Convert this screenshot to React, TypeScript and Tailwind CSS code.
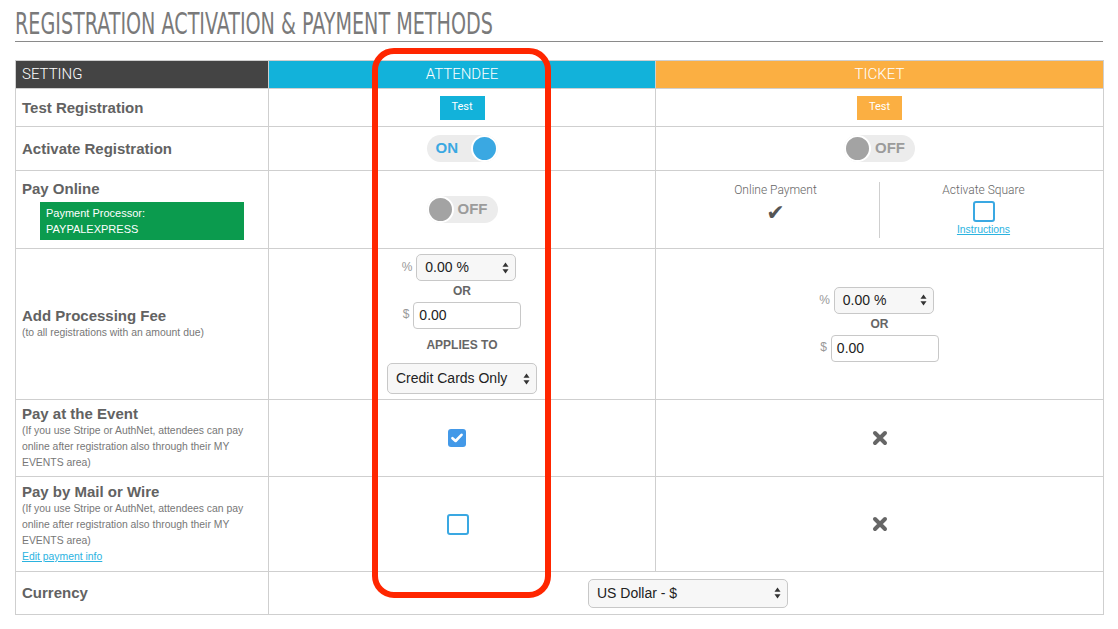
import type { ReactElement, ReactNode } from 'react'

const sans = "font-['Liberation_Sans',Arial,sans-serif]"
const light = "font-['Roboto','Liberation_Sans',sans-serif] font-light"

function Arrows(): ReactElement {
  return (
    <svg width="7" height="12" viewBox="0 0 7 12" className="shrink-0">
      <path d="M3.5 0.5 L6.5 4.8 L0.5 4.8 Z" fill="#333" />
      <path d="M3.5 11.5 L6.5 7.2 L0.5 7.2 Z" fill="#333" />
    </svg>
  )
}

function FakeSelect({ value, className }: { value: string; className: string }): ReactElement {
  return (
    <div
      className={`flex items-center justify-between rounded-[5px] border border-[#c8c8c8] bg-[#f7f7f7] pl-[8px] pr-[6px] text-[14px] text-[#222] ${sans} ${className}`}
    >
      <span>{value}</span>
      <Arrows />
    </div>
  )
}

function FakeInput({ value }: { value: string }): ReactElement {
  return (
    <div
      className={`flex h-[27px] w-[108px] items-center rounded-[4px] border border-[#c8c8c8] bg-white pl-[5px] text-[14px] text-[#222] ${sans}`}
    >
      {value}
    </div>
  )
}

function Toggle({ on }: { on: boolean }): ReactElement {
  return (
    <div className="mx-auto flex h-[27px] w-[71px] items-center rounded-full bg-[#ececec]">
      {on ? (
        <>
          <span className={`flex-1 pl-[9px] text-left text-[15px] font-bold text-[#3aa8e2] ${sans}`}>ON</span>
          <span className="h-[27px] w-[27px] rounded-full border-2 border-white bg-[#3aa8e2]" />
        </>
      ) : (
        <>
          <span className="h-[27px] w-[27px] rounded-full border-2 border-white bg-[#a3a3a3]" />
          <span className={`flex-1 pl-[4px] text-left text-[15px] font-bold text-[#9b9b9b] ${sans}`}>OFF</span>
        </>
      )}
    </div>
  )
}

function TestButton({ color }: { color: string }): ReactElement {
  return (
    <div
      className={`mx-auto flex h-[24px] w-[45px] items-center justify-center text-[11px] text-white font-['Roboto',sans-serif] ${color}`}
    >
      Test
    </div>
  )
}

function Checkbox({ checked }: { checked: boolean }): ReactElement {
  if (checked) {
    return (
      <div className="mx-auto flex h-[18px] w-[18px] items-center justify-center rounded-[3px] bg-[#4399e8]">
        <svg width="12" height="10" viewBox="0 0 12 10">
          <path d="M1.5 5.2 L4.6 8 L10.5 1.8" fill="none" stroke="white" strokeWidth="2.6" strokeLinecap="round" strokeLinejoin="round" />
        </svg>
      </div>
    )
  }
  return <div className="mx-auto h-[21px] w-[22px] rounded-[3px] border-2 border-[#3aa8e2] bg-white" />
}

function Cross(): ReactElement {
  return (
    <svg width="16" height="16" viewBox="0 0 16 16" className="mx-auto">
      <path d="M3 3 L13 13 M13 3 L3 13" stroke="#666" strokeWidth="4" strokeLinecap="round" />
    </svg>
  )
}

function Label({ title, children }: { title: string; children?: ReactNode }): ReactElement {
  return (
    <td className="border border-[#cfcfcf] px-[6px] align-middle">
      <div className={`text-[15px] font-bold leading-[18px] text-[#626262] ${sans}`}>{title}</div>
      {children}
    </td>
  )
}

function Sub({ children }: { children: ReactNode }): ReactElement {
  return <div className={`max-w-[228px] text-[10.4px] leading-[16px] text-[#777] ${sans}`}>{children}</div>
}

function Link({ children }: { children: ReactNode }): ReactElement {
  return <div className={`text-[10.4px] leading-[16px] text-[#2bb3df] underline ${sans}`}>{children}</div>
}

function FeeBlock({ applies }: { applies: boolean }): ReactElement {
  return (
    <div className="flex flex-col items-center">
      <div className="flex items-start gap-[4px] pr-[6px]">
        <span className={`pt-[4px] text-[12px] text-[#999] ${sans}`}>%</span>
        <FakeSelect value="0.00 %" className="h-[27px] w-[100px]" />
      </div>
      <div className={`py-[4px] text-[12px] font-bold leading-[13px] text-[#666] ${sans}`}>OR</div>
      <div className="flex items-start gap-[4px]">
        <span className={`pt-[3px] text-[12px] text-[#999] ${sans}`}>$</span>
        <FakeInput value="0.00" />
      </div>
      {applies && (
        <>
          <div className={`pb-[11px] pt-[10px] text-[12px] font-bold leading-[13px] text-[#666] ${sans}`}>APPLIES TO</div>
          <FakeSelect value="Credit Cards Only" className="h-[31px] w-[150px]" />
        </>
      )}
    </div>
  )
}

const cell = 'border border-[#cfcfcf] text-center align-middle'

export default function App(): ReactElement {
  return (
    <div className="relative min-h-[629px] bg-white px-[15px] pt-[9px]">
      <h1
        className="origin-left scale-x-[0.71] whitespace-nowrap text-[30px] leading-[30px] text-[#7a7a7a] font-['DejaVu_Sans_Condensed','DejaVu_Sans',sans-serif]"
      >
        REGISTRATION ACTIVATION &amp; PAYMENT METHODS
      </h1>
      <div className="mt-[2px] h-px bg-[#8a8a8a]" />

      <table className="mt-[18px] w-[1088px] table-fixed border-collapse">
        <colgroup>
          <col className="w-[253px]" />
          <col className="w-[387px]" />
          <col className="w-[448px]" />
        </colgroup>
        <tbody>
          <tr className="h-[28px]">
            <td className={`border border-[#cfcfcf] bg-[#444] px-[6px] text-[15px] text-white ${light}`}>SETTING</td>
            <td className={`border border-[#cfcfcf] bg-[#12b2da] text-center text-[15px] text-white ${light}`}>ATTENDEE</td>
            <td className={`border border-[#cfcfcf] bg-[#fbaf42] text-center text-[15px] text-white ${light}`}>TICKET</td>
          </tr>
          <tr className="h-[38px]">
            <Label title="Test Registration" />
            <td className={cell}><TestButton color="bg-[#12b2da]" /></td>
            <td className={cell}><TestButton color="bg-[#fbaf42]" /></td>
          </tr>
          <tr className="h-[44px]">
            <Label title="Activate Registration" />
            <td className={cell}><Toggle on /></td>
            <td className={cell}><Toggle on={false} /></td>
          </tr>
          <tr className="h-[78px]">
            <Label title="Pay Online">
              <div className={`ml-[18px] mt-[4px] w-[204px] bg-[#0b9b4e] px-[6px] py-[3px] text-[11px] leading-[16px] text-white ${sans}`}>
                Payment Processor:
                <br />
                PAYPALEXPRESS
              </div>
            </Label>
            <td className={cell}><Toggle on={false} /></td>
            <td className={`${cell} px-[16px]`}>
              <div className="flex items-stretch">
                <div className="flex flex-1 flex-col items-center">
                  <span className={`text-[12px] leading-[16px] text-[#666] ${light}`}>Online Payment</span>
                  <span className="mt-[2px] text-[22px] leading-[26px] text-[#555] font-['DejaVu_Sans',sans-serif]">✔</span>
                </div>
                <div className="w-px bg-[#cfcfcf]" />
                <div className="flex flex-1 flex-col items-center">
                  <span className={`text-[12px] leading-[16px] text-[#666] ${light}`}>Activate Square</span>
                  <div className="mt-[3px]"><Checkbox checked={false} /></div>
                  <Link>Instructions</Link>
                </div>
              </div>
            </td>
          </tr>
          <tr className="h-[151px]">
            <Label title="Add Processing Fee">
              <Sub>(to all registrations with an amount due)</Sub>
            </Label>
            <td className={cell}><FeeBlock applies /></td>
            <td className={cell}><FeeBlock applies={false} /></td>
          </tr>
          <tr className="h-[77px]">
            <Label title="Pay at the Event">
              <Sub>
                (If you use Stripe or AuthNet, attendees can pay online after registration also through their MY EVENTS area)
              </Sub>
            </Label>
            <td className={`${cell} pr-[10px]`}><Checkbox checked /></td>
            <td className={cell}><Cross /></td>
          </tr>
          <tr className="h-[95px]">
            <Label title="Pay by Mail or Wire">
              <Sub>
                (If you use Stripe or AuthNet, attendees can pay online after registration also through their MY EVENTS area)
              </Sub>
              <Link>Edit payment info</Link>
            </Label>
            <td className={`${cell} pr-[8px]`}><Checkbox checked={false} /></td>
            <td className={cell}><Cross /></td>
          </tr>
          <tr className="h-[43px]">
            <Label title="Currency" />
            <td colSpan={2} className={cell}>
              <FakeSelect value="US Dollar - $" className="mx-auto h-[29px] w-[200px] translate-x-[2px]" />
            </td>
          </tr>
        </tbody>
      </table>

      {/* highlight drawn over the attendee column */}
      <div className="pointer-events-none absolute left-[372px] top-[48px] h-[550px] w-[179px] rounded-[22px] border-[6px] border-[#ff2600]" />
    </div>
  )
}
